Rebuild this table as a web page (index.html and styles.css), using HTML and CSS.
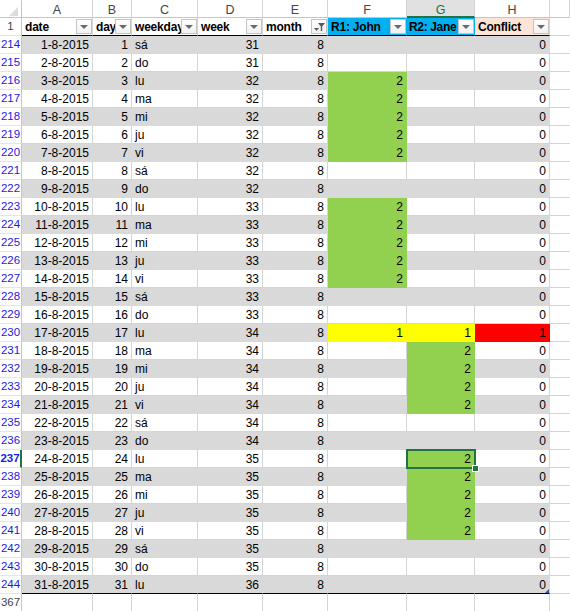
FILE: index.html
```html
<!DOCTYPE html>
<html>
<head>
<meta charset="utf-8">
<link rel="stylesheet" href="styles.css">
</head>
<body>
<div class="sheet">
  <div class="row colhdr">
    <div class="ch corner"></div><div class="ch">A</div><div class="ch">B</div><div class="ch">C</div><div class="ch">D</div><div class="ch">E</div><div class="ch">F</div><div class="ch sel">G</div><div class="ch">H</div><div class="ch"></div>
  </div>
  <div class="row hdr">
    <div class="c h black">1</div>
    <div class="c d th"><span class="lbl">date</span><span class="btn"><i class="tri"></i></span></div>
    <div class="c d th"><span class="lbl">day</span><span class="btn"><i class="tri"></i></span></div>
    <div class="c d th"><span class="lbl">weekday</span><span class="btn"><i class="tri"></i></span></div>
    <div class="c d th"><span class="lbl">week</span><span class="btn"><i class="tri"></i></span></div>
    <div class="c d th"><span class="lbl">month</span><span class="btn"><svg width="13" height="12" viewBox="0 0 13 12"><polygon points="1,7 6,7 3.5,10" fill="#5a5a5a"/><polygon points="5,2 12,2 9.2,5.5 9.2,10 7.8,10 7.8,5.5" fill="#5a5a5a"/></svg></span></div>
    <div class="c d th blue"><span class="lbl">R1: John</span><span class="btn"><i class="tri"></i></span></div>
    <div class="c d th blue tight"><span class="lbl">R2: Jane</span><span class="btn"><i class="tri"></i></span></div>
    <div class="c d th peach"><span class="lbl">Conflict</span><span class="btn"><i class="tri"></i></span></div>
    <div class="c e"></div>
  </div>

  <div class="row g"><div class="c h">214</div><div class="c d n">1-8-2015</div><div class="c d n">1</div><div class="c d">sá</div><div class="c d n">31</div><div class="c d n">8</div><div class="c d"></div><div class="c d"></div><div class="c d n">0</div><div class="c e"></div></div>
  <div class="row"><div class="c h">215</div><div class="c d n">2-8-2015</div><div class="c d n">2</div><div class="c d">do</div><div class="c d n">31</div><div class="c d n">8</div><div class="c d"></div><div class="c d"></div><div class="c d n">0</div><div class="c e"></div></div>
  <div class="row g"><div class="c h">216</div><div class="c d n">3-8-2015</div><div class="c d n">3</div><div class="c d">lu</div><div class="c d n">32</div><div class="c d n">8</div><div class="c d n gr">2</div><div class="c d"></div><div class="c d n">0</div><div class="c e"></div></div>
  <div class="row"><div class="c h">217</div><div class="c d n">4-8-2015</div><div class="c d n">4</div><div class="c d">ma</div><div class="c d n">32</div><div class="c d n">8</div><div class="c d n gr">2</div><div class="c d"></div><div class="c d n">0</div><div class="c e"></div></div>
  <div class="row g"><div class="c h">218</div><div class="c d n">5-8-2015</div><div class="c d n">5</div><div class="c d">mi</div><div class="c d n">32</div><div class="c d n">8</div><div class="c d n gr">2</div><div class="c d"></div><div class="c d n">0</div><div class="c e"></div></div>
  <div class="row"><div class="c h">219</div><div class="c d n">6-8-2015</div><div class="c d n">6</div><div class="c d">ju</div><div class="c d n">32</div><div class="c d n">8</div><div class="c d n gr">2</div><div class="c d"></div><div class="c d n">0</div><div class="c e"></div></div>
  <div class="row g"><div class="c h">220</div><div class="c d n">7-8-2015</div><div class="c d n">7</div><div class="c d">vi</div><div class="c d n">32</div><div class="c d n">8</div><div class="c d n gr">2</div><div class="c d"></div><div class="c d n">0</div><div class="c e"></div></div>
  <div class="row"><div class="c h">221</div><div class="c d n">8-8-2015</div><div class="c d n">8</div><div class="c d">sá</div><div class="c d n">32</div><div class="c d n">8</div><div class="c d"></div><div class="c d"></div><div class="c d n">0</div><div class="c e"></div></div>
  <div class="row g"><div class="c h">222</div><div class="c d n">9-8-2015</div><div class="c d n">9</div><div class="c d">do</div><div class="c d n">32</div><div class="c d n">8</div><div class="c d"></div><div class="c d"></div><div class="c d n">0</div><div class="c e"></div></div>
  <div class="row"><div class="c h">223</div><div class="c d n">10-8-2015</div><div class="c d n">10</div><div class="c d">lu</div><div class="c d n">33</div><div class="c d n">8</div><div class="c d n gr">2</div><div class="c d"></div><div class="c d n">0</div><div class="c e"></div></div>
  <div class="row g"><div class="c h">224</div><div class="c d n">11-8-2015</div><div class="c d n">11</div><div class="c d">ma</div><div class="c d n">33</div><div class="c d n">8</div><div class="c d n gr">2</div><div class="c d"></div><div class="c d n">0</div><div class="c e"></div></div>
  <div class="row"><div class="c h">225</div><div class="c d n">12-8-2015</div><div class="c d n">12</div><div class="c d">mi</div><div class="c d n">33</div><div class="c d n">8</div><div class="c d n gr">2</div><div class="c d"></div><div class="c d n">0</div><div class="c e"></div></div>
  <div class="row g"><div class="c h">226</div><div class="c d n">13-8-2015</div><div class="c d n">13</div><div class="c d">ju</div><div class="c d n">33</div><div class="c d n">8</div><div class="c d n gr">2</div><div class="c d"></div><div class="c d n">0</div><div class="c e"></div></div>
  <div class="row"><div class="c h">227</div><div class="c d n">14-8-2015</div><div class="c d n">14</div><div class="c d">vi</div><div class="c d n">33</div><div class="c d n">8</div><div class="c d n gr">2</div><div class="c d"></div><div class="c d n">0</div><div class="c e"></div></div>
  <div class="row g"><div class="c h">228</div><div class="c d n">15-8-2015</div><div class="c d n">15</div><div class="c d">sá</div><div class="c d n">33</div><div class="c d n">8</div><div class="c d"></div><div class="c d"></div><div class="c d n">0</div><div class="c e"></div></div>
  <div class="row"><div class="c h">229</div><div class="c d n">16-8-2015</div><div class="c d n">16</div><div class="c d">do</div><div class="c d n">33</div><div class="c d n">8</div><div class="c d"></div><div class="c d"></div><div class="c d n">0</div><div class="c e"></div></div>
  <div class="row g"><div class="c h">230</div><div class="c d n">17-8-2015</div><div class="c d n">17</div><div class="c d">lu</div><div class="c d n">34</div><div class="c d n">8</div><div class="c d n ye">1</div><div class="c d n ye">1</div><div class="c d n rd">1</div><div class="c e"></div></div>
  <div class="row"><div class="c h">231</div><div class="c d n">18-8-2015</div><div class="c d n">18</div><div class="c d">ma</div><div class="c d n">34</div><div class="c d n">8</div><div class="c d"></div><div class="c d n gr">2</div><div class="c d n">0</div><div class="c e"></div></div>
  <div class="row g"><div class="c h">232</div><div class="c d n">19-8-2015</div><div class="c d n">19</div><div class="c d">mi</div><div class="c d n">34</div><div class="c d n">8</div><div class="c d"></div><div class="c d n gr">2</div><div class="c d n">0</div><div class="c e"></div></div>
  <div class="row"><div class="c h">233</div><div class="c d n">20-8-2015</div><div class="c d n">20</div><div class="c d">ju</div><div class="c d n">34</div><div class="c d n">8</div><div class="c d"></div><div class="c d n gr">2</div><div class="c d n">0</div><div class="c e"></div></div>
  <div class="row g"><div class="c h">234</div><div class="c d n">21-8-2015</div><div class="c d n">21</div><div class="c d">vi</div><div class="c d n">34</div><div class="c d n">8</div><div class="c d"></div><div class="c d n gr">2</div><div class="c d n">0</div><div class="c e"></div></div>
  <div class="row"><div class="c h">235</div><div class="c d n">22-8-2015</div><div class="c d n">22</div><div class="c d">sá</div><div class="c d n">34</div><div class="c d n">8</div><div class="c d"></div><div class="c d"></div><div class="c d n">0</div><div class="c e"></div></div>
  <div class="row g"><div class="c h">236</div><div class="c d n">23-8-2015</div><div class="c d n">23</div><div class="c d">do</div><div class="c d n">34</div><div class="c d n">8</div><div class="c d"></div><div class="c d"></div><div class="c d n">0</div><div class="c e"></div></div>
  <div class="row"><div class="c h cur">237</div><div class="c d n">24-8-2015</div><div class="c d n">24</div><div class="c d">lu</div><div class="c d n">35</div><div class="c d n">8</div><div class="c d"></div><div class="c d n gr active">2</div><div class="c d n">0</div><div class="c e"></div></div>
  <div class="row g"><div class="c h">238</div><div class="c d n">25-8-2015</div><div class="c d n">25</div><div class="c d">ma</div><div class="c d n">35</div><div class="c d n">8</div><div class="c d"></div><div class="c d n gr">2</div><div class="c d n">0</div><div class="c e"></div></div>
  <div class="row"><div class="c h">239</div><div class="c d n">26-8-2015</div><div class="c d n">26</div><div class="c d">mi</div><div class="c d n">35</div><div class="c d n">8</div><div class="c d"></div><div class="c d n gr">2</div><div class="c d n">0</div><div class="c e"></div></div>
  <div class="row g"><div class="c h">240</div><div class="c d n">27-8-2015</div><div class="c d n">27</div><div class="c d">ju</div><div class="c d n">35</div><div class="c d n">8</div><div class="c d"></div><div class="c d n gr">2</div><div class="c d n">0</div><div class="c e"></div></div>
  <div class="row"><div class="c h">241</div><div class="c d n">28-8-2015</div><div class="c d n">28</div><div class="c d">vi</div><div class="c d n">35</div><div class="c d n">8</div><div class="c d"></div><div class="c d n gr">2</div><div class="c d n">0</div><div class="c e"></div></div>
  <div class="row g"><div class="c h">242</div><div class="c d n">29-8-2015</div><div class="c d n">29</div><div class="c d">sá</div><div class="c d n">35</div><div class="c d n">8</div><div class="c d"></div><div class="c d"></div><div class="c d n">0</div><div class="c e"></div></div>
  <div class="row"><div class="c h">243</div><div class="c d n">30-8-2015</div><div class="c d n">30</div><div class="c d">do</div><div class="c d n">35</div><div class="c d n">8</div><div class="c d"></div><div class="c d"></div><div class="c d n">0</div><div class="c e"></div></div>
  <div class="row g last"><div class="c h">244</div><div class="c d n">31-8-2015</div><div class="c d n">31</div><div class="c d">lu</div><div class="c d n">36</div><div class="c d n">8</div><div class="c d"></div><div class="c d"></div><div class="c d n resize">0</div><div class="c e"></div></div>
  <div class="row"><div class="c h black">367</div><div class="c d"></div><div class="c d"></div><div class="c d"></div><div class="c d"></div><div class="c d"></div><div class="c d"></div><div class="c d"></div><div class="c d"></div><div class="c e"></div></div>
</div>
</body>
</html>
```

FILE: styles.css
```css
html, body {
  margin: 0;
  padding: 0;
  background: #fff;
}

body {
  font-family: "Liberation Sans", Arial, sans-serif;
  font-size: 12px;
  color: #000;
  width: 570px;
  height: 611px;
  overflow: hidden;
}

.sheet {
  --cols: 22px 71px 39px 66px 65px 65px 79px 68px 75px 1fr;
  display: flex;
  flex-direction: column;
}

.row {
  display: grid;
  grid-template-columns: var(--cols);
  height: 18px;
}

/* column letter header */
.ch {
  box-sizing: border-box;
  height: 18px;
  border-right: 1px solid #d4d4d4;
  border-bottom: 1px solid #c6c6c6;
  text-align: center;
  font-size: 12.5px;
  line-height: 14px;
  padding-top: 3px;
  color: #444;
  background: #fff;
}

.ch.corner {
  position: relative;
  border-right-color: #c6c6c6;
}

.ch.corner::after {
  content: "";
  position: absolute;
  right: 3px;
  bottom: 1px;
  border-left: 9px solid transparent;
  border-bottom: 9px solid #dcdcdc;
}

.ch.sel {
  background: #e1e1e1;
  color: #217346;
  border-bottom: 2px solid #217346;
}

/* cells */
.c {
  box-sizing: border-box;
  height: 18px;
  border-right: 1px solid #d4d4d4;
  border-bottom: 1px solid #d4d4d4;
  padding: 1px 3px 0 3px;
  line-height: 16px;
  white-space: nowrap;
  overflow: hidden;
}

.n {
  text-align: right;
}

.h {
  padding: 0;
  text-align: center;
  font-size: 11.5px;
  line-height: 17px;
  color: #1a1ae6;
  border-right-color: #c6c6c6;
  border-bottom-color: #e4e4e4;
}

.h.black {
  color: #444;
}

.h.cur {
  font-weight: bold;
  border-right: 2px solid #217346;
}

/* header row of the table */
.hdr .d {
  border-bottom: 1px solid #000;
}

.th {
  display: flex;
  align-items: flex-start;
  font-weight: bold;
  padding: 1px 0 0 3px;
  letter-spacing: -0.2px;
}

.th.tight {
  padding-left: 2px;
  letter-spacing: -0.35px;
}

.th .lbl {
  flex: 1 1 auto;
  min-width: 0;
  width: 0;
  overflow: visible;
  white-space: nowrap;
  line-height: 16px;
}

.btn {
  position: relative;
  z-index: 1;
  flex-shrink: 0;
  box-sizing: border-box;
  width: 16px;
  height: 15px;
  border: 1px solid #c4c4c4;
  background: linear-gradient(#ffffff, #f1f1f1);
  display: flex;
  align-items: center;
  justify-content: center;
}

.tri {
  display: block;
  width: 0;
  height: 0;
  border-left: 4px solid transparent;
  border-right: 4px solid transparent;
  border-top: 4px solid #6a6a6a;
  margin-top: 1px;
}

.th.blue {
  background: #00b0f0;
  border-right-color: #00b0f0;
}

.th.peach {
  background: #fce4d6;
}

/* banded rows */
.row.g .d {
  background: #d9d9d9;
  border-color: #d9d9d9;
}

/* fills */
.row .d.gr {
  background: #92d050;
  border-color: #92d050;
}

.row .d.ye {
  background: #ffff00;
  border-color: #ffff00;
}

.row .d.rd {
  background: #ff0000;
  border-color: #ff0000;
}

.row.last .d {
  border-bottom-color: #000;
}

/* active cell */
.active {
  position: relative;
  overflow: visible;
  z-index: 2;
}

.active::after {
  content: "";
  position: absolute;
  left: -1px;
  top: -1px;
  right: -2px;
  bottom: -2px;
  border: 2px solid #217346;
}

.active::before {
  content: "";
  position: absolute;
  right: -5px;
  bottom: -5px;
  width: 5px;
  height: 5px;
  background: #217346;
  border: 1px solid #fff;
  z-index: 3;
}

.resize {
  position: relative;
}

.resize::after {
  content: "";
  position: absolute;
  right: 0;
  bottom: 0;
  border-left: 4px solid transparent;
  border-bottom: 4px solid #3a4fb0;
}

.e {
  border-right: none;
}
```
